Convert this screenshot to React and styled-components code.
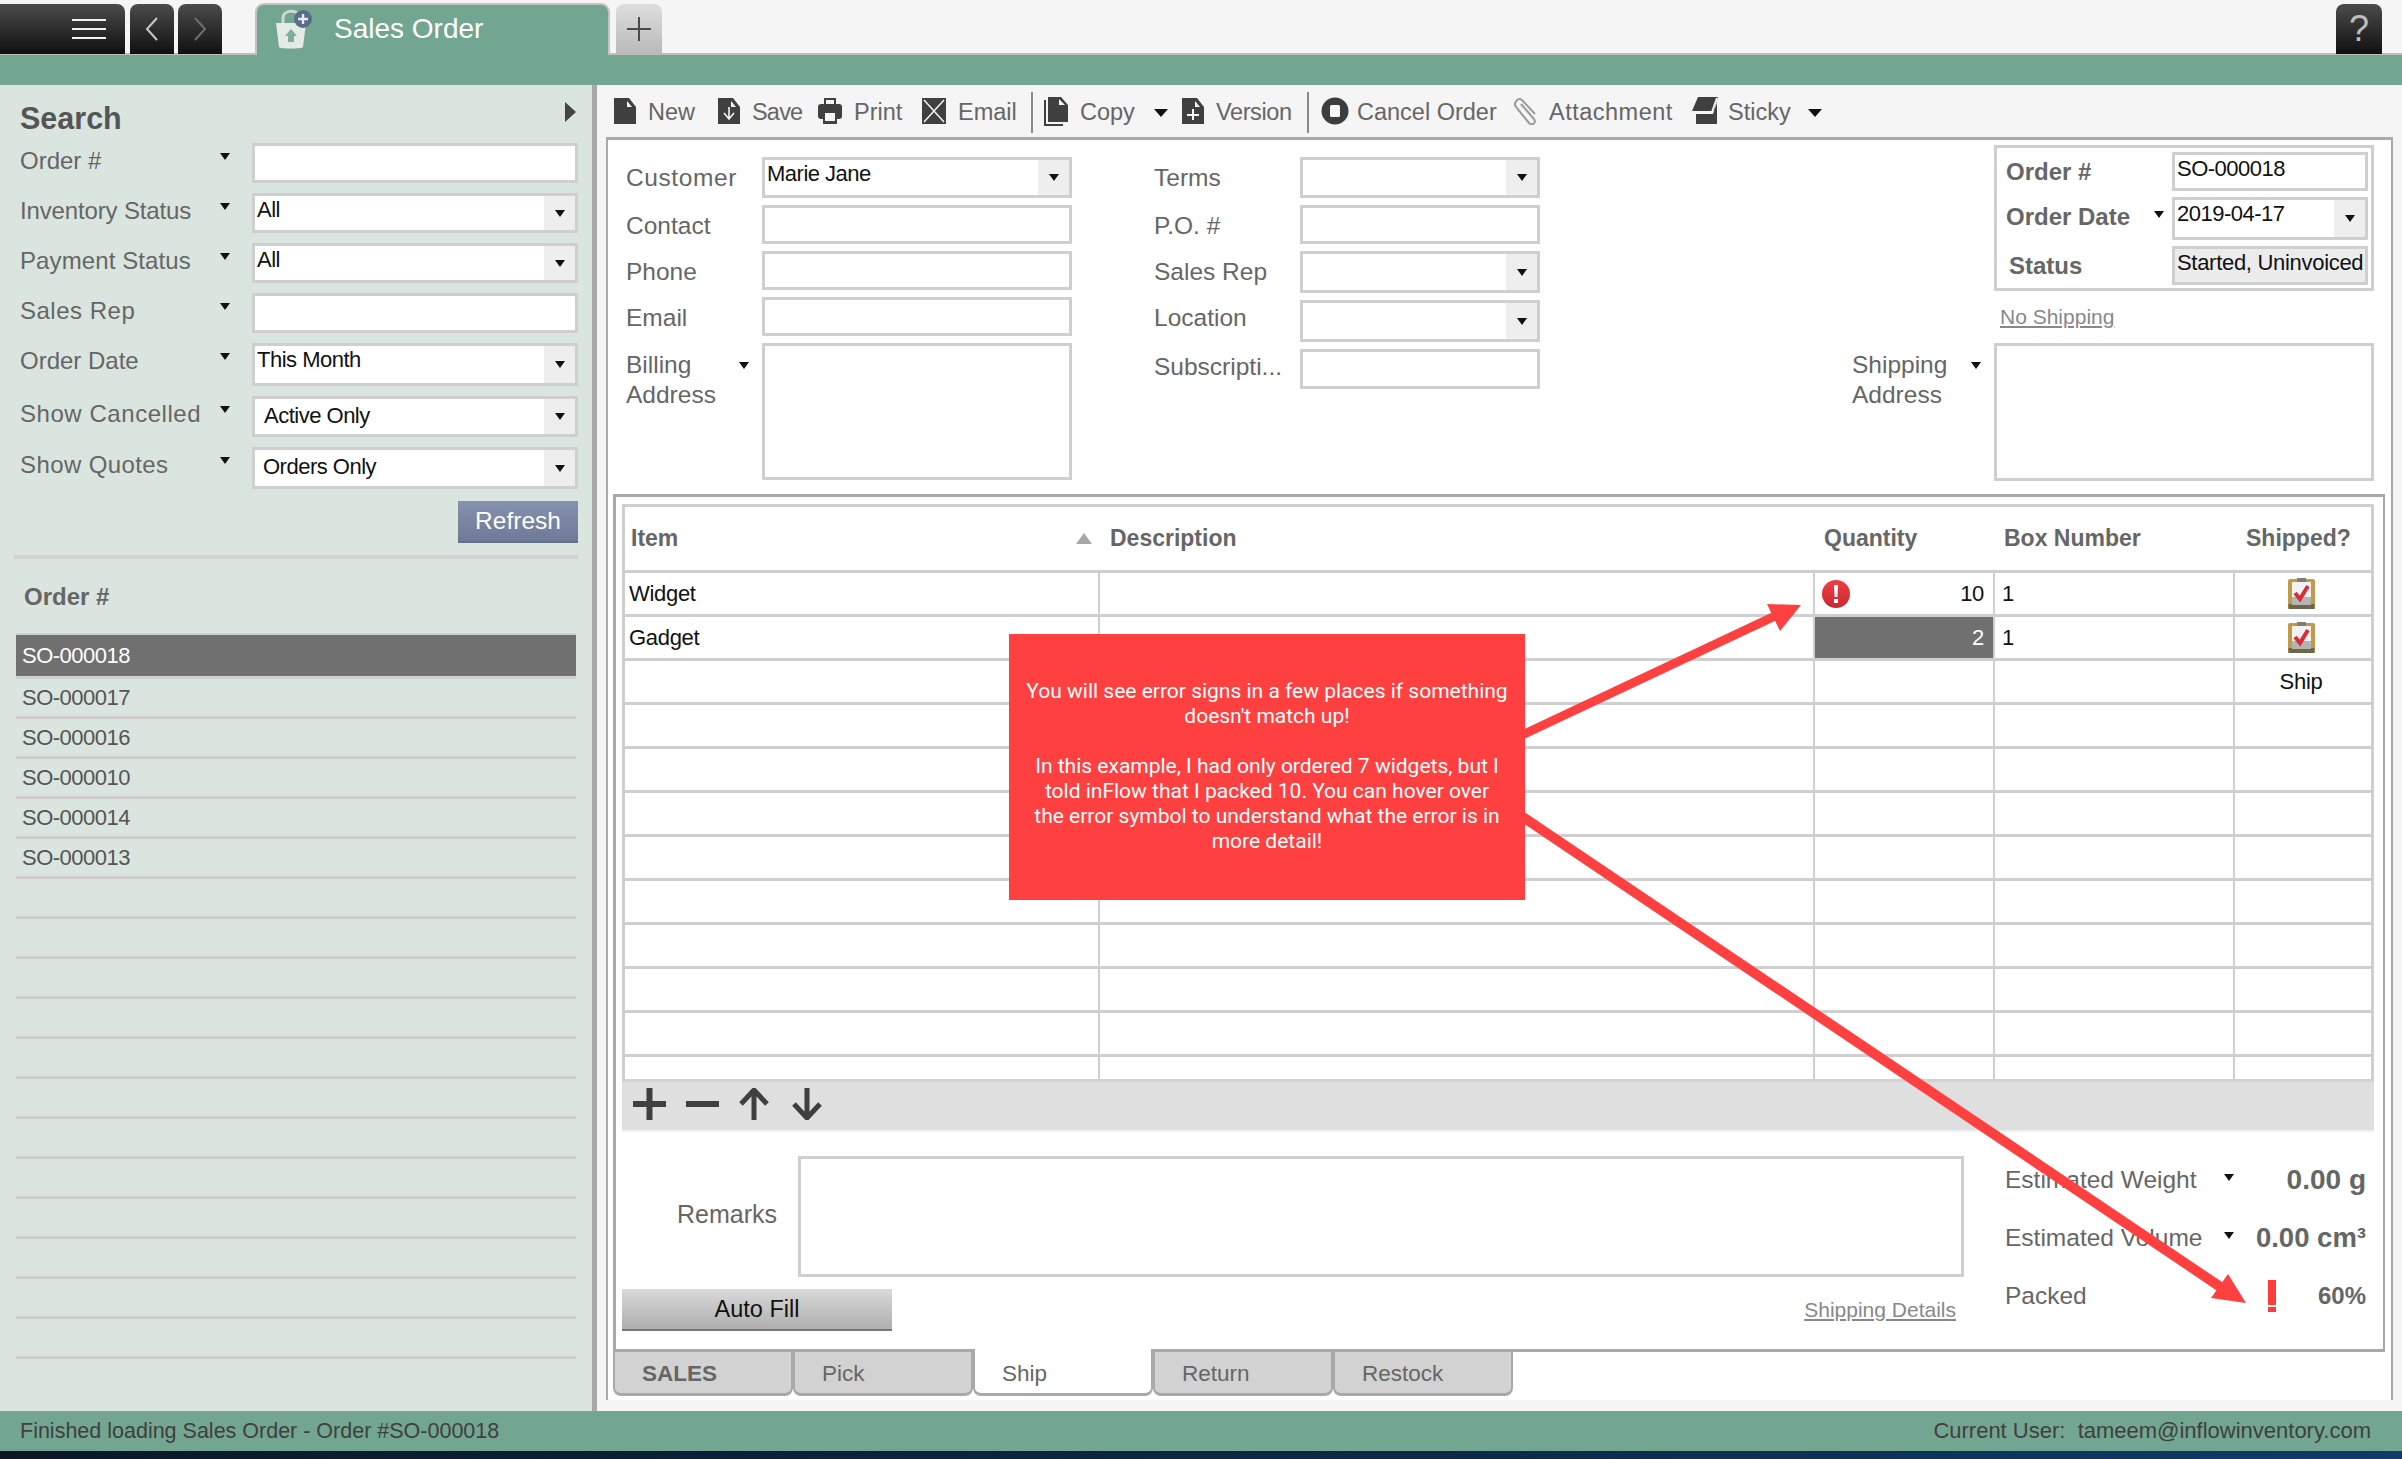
import React from "react";
import styled, { createGlobalStyle } from "styled-components";

const GlobalStyle = createGlobalStyle`
  html, body {
    margin: 0;
    padding: 0;
    width: 2402px;
    height: 1459px;
    overflow: hidden;
    background: #f5f5f5;
    font-family: "Liberation Sans", Arial, sans-serif;
  }
  #root {
    width: 2402px;
    height: 1459px;
  }
`;

const GREEN = "#73a690";
const LINE = "#cfcfcf";

const Page = styled.div`
  position: relative;
  display: flex;
  flex-direction: column;
  width: 2402px;
  height: 1459px;
  overflow: hidden;
`;

/* top bar */
const TopBar = styled.div`
  display: flex;
  align-items: flex-end;
  box-sizing: border-box;
  height: 55px;
  padding-top: 3px;
  background: #f5f5f5;
  border-bottom: 2px solid #bdbdbd;
`;

const BlackBtn = styled.div`
  display: flex;
  align-items: center;
  justify-content: ${(p) => p.$justify || "center"};
  box-sizing: border-box;
  width: ${(p) => p.$w}px;
  height: 50px;
  margin-left: ${(p) => p.$ml || 0}px;
  margin-right: ${(p) => p.$mr || 0}px;
  padding-right: ${(p) => p.$pr || 0}px;
  margin-bottom: -1px;
  border-radius: ${(p) => (p.$flat ? "0 8px 0 0" : "8px 8px 0 0")};
  background: linear-gradient(#4b4b4b, #101010);
  color: #bdbdbd;
  font-size: 36px;
  font-weight: 300;
`;

const OrderTab = styled.div`
  display: flex;
  align-items: center;
  box-sizing: border-box;
  width: 355px;
  height: 52px;
  margin: 0 0 -2px 33px;
  padding: 0 0 3px 17px;
  border: 2px solid #c4c4c4;
  border-bottom: none;
  border-radius: 9px 9px 0 0;
  background: ${GREEN};
  color: #fff;
  font-size: 28px;
`;

const TabTitle = styled.span`
  margin-left: 22px;
`;

const PlusTab = styled.div`
  display: flex;
  align-items: center;
  justify-content: center;
  box-sizing: border-box;
  width: 46px;
  height: 50px;
  margin-left: 6px;
  margin-bottom: -1px;
  border-radius: 8px 8px 0 0;
  background: linear-gradient(#dedede, #b9b9b9);
`;

const Spacer = styled.div`
  flex: 1;
`;

const GreenBand = styled.div`
  flex: none;
  height: 30px;
  background: ${GREEN};
`;

const Main = styled.div`
  display: flex;
  flex: none;
  height: 1326px;
`;

/* left side */
const Sidebar = styled.aside`
  box-sizing: border-box;
  flex: none;
  width: 597px;
  padding: 0 14px 0 20px;
  background: #dbe5df;
  border-right: 5px solid #a9a9a9;
`;

const SearchHead = styled.div`
  display: flex;
  justify-content: space-between;
  height: 58px;
  padding-right: 2px;
`;

const SearchTitle = styled.h2`
  margin: 15px 0 0;
  font-size: 30.5px;
  line-height: 36px;
  font-weight: 700;
  color: #555;
`;

const CollapseArrow = styled.div`
  width: 0;
  height: 0;
  margin-top: 17px;
  border-left: 11px solid #444;
  border-top: 10px solid transparent;
  border-bottom: 10px solid transparent;
`;

const SearchRows = styled.div`
  display: flex;
  flex-direction: column;
  gap: 10px;
`;

const SearchRow = styled.div`
  display: flex;
  height: ${(p) => p.$h}px;
`;

const SearchLabel = styled.div`
  display: flex;
  justify-content: space-between;
  box-sizing: border-box;
  width: 232px;
  padding-right: 22px;
  font-size: 24px;
  line-height: 36px;
  letter-spacing: ${(p) => p.$ls || 0}px;
  color: #666;
  white-space: nowrap;
`;

const Caret = styled.span`
  flex: none;
  width: 0;
  height: 0;
  margin-top: ${(p) => p.$mt || 0}px;
  border-left: ${(p) => p.$size || 5.5}px solid transparent;
  border-right: ${(p) => p.$size || 5.5}px solid transparent;
  border-top: ${(p) => (p.$size ? p.$size + 1 : 7)}px solid #111;
`;

const Box = styled.div`
  display: flex;
  box-sizing: border-box;
  flex: none;
  width: ${(p) => (p.$w ? p.$w + "px" : "auto")};
  height: ${(p) => (p.$h ? p.$h + "px" : "100%")};
  border: 3px solid ${LINE};
  background: ${(p) => p.$bg || "#fff"};
`;

const BoxText = styled.div`
  flex: 1;
  padding: ${(p) => p.$pt || 0}px 0 0 ${(p) => p.$pl || 2}px;
  font-size: 22px;
  line-height: 28px;
  letter-spacing: ${(p) => (p.$ls !== undefined ? p.$ls : -0.5)}px;
  color: #111;
  white-space: nowrap;
`;

const DropBtn = styled.div`
  display: flex;
  align-items: center;
  justify-content: center;
  flex: none;
  width: 31px;
  background: #eeeeee;
`;

const RefreshRow = styled.div`
  display: flex;
  justify-content: flex-end;
  margin-top: 12px;
`;

const RefreshBtn = styled.div`
  box-sizing: border-box;
  width: 120px;
  height: 42px;
  background: linear-gradient(#8591ad, #6f7a98);
  border-bottom: 2px solid #666f8a;
  color: #fff;
  font-size: 24.5px;
  line-height: 40px;
  text-align: center;
`;

const SideDivider = styled.div`
  height: 4px;
  margin: 12px 0 0 -6px;
  background: #d2d2d2;
`;

const ListTitle = styled.div`
  margin: 20px 0 0 4px;
  height: 54px;
  font-size: 24px;
  font-weight: 700;
  line-height: 36px;
  color: #666;
`;

const OrderList = styled.div`
  margin-left: -4px;
  width: 560px;
  border-top: 2px solid ${LINE};
`;

const OrderRow = styled.div`
  box-sizing: border-box;
  height: ${(p) => (p.$active ? 44 : 40)}px;
  padding-left: 6px;
  border-bottom: 3px solid ${LINE};
  background: ${(p) => (p.$active ? "linear-gradient(#707070 42px, #dbe5df 42px)" : "transparent")};
  color: ${(p) => (p.$active ? "#fff" : "#555")};
  font-size: 22px;
  letter-spacing: -0.5px;
  line-height: ${(p) => (p.$active ? 42 : 38)}px;
`;

/* right side */
const Content = styled.main`
  flex: 1;
  background: #f5f5f5;
`;

const Toolbar = styled.div`
  display: flex;
  align-items: center;
  box-sizing: border-box;
  height: 52px;
  padding: 3px 0 0 17px;
`;

const ToolBtn = styled.div`
  display: flex;
  align-items: center;
  gap: ${(p) => p.$gap || 12}px;
  flex: none;
  width: ${(p) => p.$w}px;
  font-size: 23.5px;
  letter-spacing: ${(p) => p.$ls || 0}px;
  color: #666;
  white-space: nowrap;

  svg {
    margin-top: -4px;
  }
`;

const ToolSep = styled.div`
  flex: none;
  width: 2px;
  height: 41px;
  margin: 0 ${(p) => p.$mr}px 0 0;
  background: #8a8a8a;
`;

const OuterPanel = styled.div`
  box-sizing: border-box;
  width: 1787px;
  height: 1263px;
  margin-left: 9px;
  background: #fff;
  border: 2px solid #a9a9a9;
  border-top-width: 3px;
  border-bottom: none;
`;

const FormTop = styled.div`
  display: flex;
  height: 354px;
`;

const FormCol = styled.div`
  display: flex;
  flex-direction: column;
  gap: 7px;
  flex: none;
  width: ${(p) => p.$w}px;
  margin-left: ${(p) => p.$ml}px;
  padding-top: 17px;
`;

const FormRow = styled.div`
  display: flex;
  height: ${(p) => p.$h}px;
`;

const FormLabel = styled.div`
  box-sizing: border-box;
  flex: none;
  width: ${(p) => p.$w}px;
  font-size: 24.5px;
  line-height: ${(p) => p.$lh || 42}px;
  letter-spacing: ${(p) => p.$ls || 0}px;
  color: #666;
  white-space: nowrap;
`;

const MultiLabel = styled.div`
  display: flex;
  justify-content: space-between;
  box-sizing: border-box;
  flex: none;
  width: ${(p) => p.$w}px;
  padding: 7px 13px 0 0;
  font-size: 24.5px;
  line-height: 30px;
  color: #666;
`;

const RightCol = styled.div`
  display: flex;
  flex-direction: column;
  align-items: flex-end;
  flex: none;
  width: 522px;
  margin-left: 312px;
  padding-top: 5px;
`;

const OrderBox = styled.div`
  display: flex;
  flex-direction: column;
  gap: 6px;
  box-sizing: border-box;
  width: 380px;
  height: 146px;
  padding: 4px 3px 0 9px;
  border: 3px solid ${LINE};
`;

const OrderBoxRow = styled.div`
  display: flex;
  height: ${(p) => p.$h}px;
`;

const OrderBoxLabel = styled.div`
  display: flex;
  justify-content: space-between;
  box-sizing: border-box;
  flex: none;
  width: 166px;
  padding: 0 8px 0 ${(p) => p.$pl || 0}px;
  font-size: 24px;
  font-weight: 700;
  line-height: 40px;
  color: #666;
  white-space: nowrap;
`;

const LinkText = styled.a`
  font-size: 21px;
  line-height: 26px;
  color: #888;
  text-decoration: underline;
`;

const NoShippingRow = styled.div`
  box-sizing: border-box;
  width: 380px;
  height: 52px;
  padding: 13px 0 0 6px;
`;

const InnerPanel = styled.div`
  box-sizing: border-box;
  width: 1772px;
  height: 858px;
  margin-left: 5px;
  padding: 7px 0 0 6px;
  border: 3px solid #a9a9a9;
  border-right-width: 2px;
`;

const Grid = styled.div`
  box-sizing: border-box;
  width: 1752px;
  height: 575px;
  overflow: hidden;
  border: 3px solid ${LINE};
  border-bottom: none;
`;

const GridRow = styled.div`
  display: grid;
  grid-template-columns: 475px 715px 180px 240px 1fr;
  box-sizing: border-box;
  height: ${(p) => p.$h || 44}px;
  border-bottom: 3px solid ${LINE};
`;

const HeadCell = styled.div`
  display: flex;
  align-items: center;
  justify-content: space-between;
  padding: 0 ${(p) => p.$pr || 0}px 0 ${(p) => p.$pl}px;
  font-size: 23px;
  font-weight: 700;
  color: #666;
`;

const SortArrow = styled.span`
  width: 0;
  height: 0;
  border-left: 8px solid transparent;
  border-right: 8px solid transparent;
  border-bottom: 11px solid #a8a8a8;
`;

const Cell = styled.div`
  display: flex;
  align-items: center;
  justify-content: ${(p) => p.$justify || "flex-start"};
  box-sizing: border-box;
  padding: 0 ${(p) => p.$pr || 0}px 0 ${(p) => p.$pl || 0}px;
  border-right: ${(p) => (p.$last ? "none" : `2px solid ${LINE}`)};
  background: ${(p) => (p.$active ? "#707070" : "transparent")};
  color: ${(p) => (p.$active ? "#fff" : "#111")};
  font-size: 22px;
  letter-spacing: -0.3px;
`;

const RowTools = styled.div`
  display: flex;
  align-items: center;
  box-sizing: border-box;
  width: 1752px;
  height: 53px;
  padding: 0 0 4px 11px;
  background: #dfdfdf;
  border-top: 3px solid #d2d2d2;
  border-bottom: 2px solid #eef2f6;
`;

const RowToolIcon = styled.svg`
  flex: none;
  margin-right: ${(p) => p.$mr || 0}px;
`;

const BottomArea = styled.div`
  display: flex;
`;

const BottomLeft = styled.div`
  flex: none;
  width: 1342px;
  padding-top: 24px;
`;

const RemarksRow = styled.div`
  display: flex;
  align-items: center;
  height: 121px;
`;

const RemarksLabel = styled.div`
  flex: none;
  box-sizing: border-box;
  width: 176px;
  padding: 0 21px 4px 0;
  text-align: right;
  font-size: 25px;
  color: #666;
`;

const BottomFooter = styled.div`
  display: flex;
  align-items: center;
  justify-content: space-between;
  margin-top: 12px;
  padding-right: 8px;
`;

const AutoFillBtn = styled.div`
  box-sizing: border-box;
  width: 270px;
  height: 42px;
  background: linear-gradient(#d9d9d9, #afafaf);
  border-bottom: 2px solid #777;
  color: #111;
  font-size: 23.5px;
  line-height: 41px;
  text-align: center;
`;

const Summary = styled.div`
  flex: none;
  width: 361px;
  margin-left: 41px;
  padding-top: 19px;
`;

const SummaryRow = styled.div`
  display: flex;
  align-items: center;
  height: 58px;
`;

const SummaryLabel = styled.div`
  flex: none;
  width: ${(p) => p.$w}px;
  font-size: 24.5px;
  color: #666;
  white-space: nowrap;
`;

const SummaryValue = styled.div`
  margin-left: auto;
  font-size: ${(p) => p.$fs || 27.5}px;
  font-weight: 700;
  color: #666;
  white-space: nowrap;
`;

const Tabs = styled.div`
  position: relative;
  display: flex;
  margin: -3px 0 0 5px;
`;

const SheetTab = styled.div`
  box-sizing: border-box;
  width: 180px;
  height: 47px;
  padding-left: 27px;
  border: 2px solid #a9a9a9;
  border-top-width: ${(p) => (p.$active ? 0 : 3)}px;
  border-bottom-width: 3px;
  border-radius: 0 0 8px 8px;
  background: ${(p) => (p.$active ? "#fff" : "#d2d2d2")};
  font-size: 22.5px;
  font-weight: ${(p) => (p.$bold ? 700 : 400)};
  line-height: ${(p) => (p.$active ? 50 : 44)}px;
  color: #666;
`;

const StatusBar = styled.footer`
  display: flex;
  align-items: center;
  justify-content: space-between;
  flex: none;
  height: 40px;
  padding: 0 31px 0 20px;
  background: ${GREEN};
  font-size: 22px;
  color: #3f3f3f;
`;

const StatusLeft = styled.span`
  font-size: 21.5px;
`;

const DesktopStrip = styled.div`
  flex: none;
  height: 8px;
  background: linear-gradient(90deg, #0a1826, #0c2a48 60%, #0f3c68);
`;

/* annotation on top of the app */
const Callout = styled.div`
  position: absolute;
  left: 1009px;
  top: 634px;
  display: flex;
  align-items: center;
  justify-content: center;
  box-sizing: border-box;
  width: 516px;
  height: 266px;
  padding-bottom: 2px;
  background: #ff4040;
  color: #fff;
  font-family: Roboto, "Liberation Sans", sans-serif;
  font-size: 21px;
  line-height: 25px;
  text-align: center;
  white-space: nowrap;
`;

const ArrowLayer = styled.svg`
  position: absolute;
  left: 0;
  top: 0;
  pointer-events: none;
`;

/* drawings */
const DARK = "#404040";

const DocPath = "M0 0h15l7 9v17H0z";

const NewIcon = () => (
  <svg width="22" height="26" viewBox="0 0 22 26">
    <path d={DocPath} fill={DARK} />
    <path d="M13 3l5 6h-5z" fill="#f5f5f5" />
  </svg>
);

const SaveIcon = () => (
  <svg width="22" height="26" viewBox="0 0 22 26">
    <path d={DocPath} fill={DARK} />
    <path d="M13 3l5 6h-5z" fill="#f5f5f5" />
    <path d="M11 9v11M6 15l5 6 5-6" fill="none" stroke="#f5f5f5" strokeWidth="1.6" />
  </svg>
);

const PrintIcon = () => (
  <svg width="24" height="26" viewBox="0 0 24 26">
    <path d="M6 0h12v7H6z" fill={DARK} />
    <path d="M8 2h8v5H8z" fill="#f5f5f5" />
    <rect x="0" y="6" width="24" height="15" rx="3" fill={DARK} />
    <path d="M5 15h14v11H5z" fill={DARK} />
    <path d="M7 15h10v8H7z" fill="#f5f5f5" />
  </svg>
);

const EmailIcon = () => (
  <svg width="24" height="26" viewBox="0 0 24 26">
    <rect width="24" height="26" fill={DARK} />
    <path d="M2 2l20 22M22 2L2 24" stroke="#f5f5f5" strokeWidth="1.5" />
  </svg>
);

const CopyIcon = () => (
  <svg width="25" height="30" viewBox="0 0 25 30">
    <path d="M4 1h13l7 8v17H4z" fill={DARK} />
    <path d="M15 3l6 6h-6z" fill="#f5f5f5" />
    <path d="M1 4v25h18" fill="none" stroke={DARK} strokeWidth="2" />
  </svg>
);

const VersionIcon = () => (
  <svg width="22" height="26" viewBox="0 0 22 26">
    <path d={DocPath} fill={DARK} />
    <path d="M13 3l5 6h-5z" fill="#f5f5f5" />
    <path d="M11 11v11M5 17h12" stroke="#f5f5f5" strokeWidth="2" />
  </svg>
);

const CancelIcon = () => (
  <svg width="28" height="28" viewBox="0 0 28 28">
    <circle cx="14" cy="14" r="13.5" fill="#3d3d3d" />
    <rect x="9" y="8" width="10" height="12" rx="1.5" fill="#f5f5f5" />
  </svg>
);

const ClipIcon = () => (
  <svg width="27" height="28" viewBox="0 0 27 28">
    <path
      d="M8 7l13 15c3 4-2 7-5 4L3 10C0 6 5 0 9 3l13 14"
      transform="translate(1 0)"
      fill="none"
      stroke="#9a9a9a"
      strokeWidth="2"
    />
  </svg>
);

const StickyIcon = () => (
  <svg width="26" height="27" viewBox="0 0 26 27">
    <path d="M6 0h20l-4 14H0z" fill={DARK} />
    <path d="M0 15h20L25 1" fill="none" stroke="#f5f5f5" strokeWidth="2" />
    <path d="M4 17h17l4-11v21H4z" fill={DARK} />
  </svg>
);

const MenuIcon = () => (
  <svg width="34" height="20" viewBox="0 0 34 20">
    <path d="M0 1h34M0 10h34M0 19h34" stroke="#f2f2f2" strokeWidth="2" />
  </svg>
);

const Chevron = ({ dir, color }) => (
  <svg width="14" height="24" viewBox="0 0 14 24">
    <path
      d={dir === "left" ? "M12 1L2 12l10 11" : "M2 1l10 11L2 23"}
      fill="none"
      stroke={color}
      strokeWidth="2"
    />
  </svg>
);

const BagIcon = () => (
  <svg width="38" height="40" viewBox="0 0 38 40">
    <path d="M9 15V9c0-9 17-9 17 0" fill="none" stroke="#cfd8d4" strokeWidth="3" />
    <path d="M2 14h30l-3 24c-1 2-23 2-24 0z" fill="#e4ebe7" />
    <path d="M17 20l6 7h-3v6h-6v-6h-3z" fill="#7fae9a" />
    <circle cx="29" cy="10" r="9" fill="#5d6b8a" />
    <path d="M29 5v10M24 10h10" stroke="#e8ecf2" strokeWidth="2.4" />
  </svg>
);

const PlusThin = () => (
  <svg width="24" height="24" viewBox="0 0 24 24">
    <path d="M12 0v24M0 12h24" stroke="#4a4a4a" strokeWidth="2" />
  </svg>
);

const RowPlus = () => (
  <RowToolIcon $mr={20} width="33" height="32" viewBox="0 0 33 32">
    <path d="M16.5 0v32M0 16h33" stroke="#3f3f3f" strokeWidth="6" />
  </RowToolIcon>
);

const RowMinus = () => (
  <RowToolIcon $mr={20} width="33" height="32" viewBox="0 0 33 32">
    <path d="M0 16h33" stroke="#3f3f3f" strokeWidth="6" />
  </RowToolIcon>
);

const RowUp = () => (
  <RowToolIcon $mr={23} width="30" height="32" viewBox="0 0 30 32">
    <path d="M15 32V3M2 16L15 2l13 14" fill="none" stroke="#3f3f3f" strokeWidth="5" />
  </RowToolIcon>
);

const RowDown = () => (
  <RowToolIcon width="30" height="32" viewBox="0 0 30 32">
    <path d="M15 0v29M2 16l13 14 13-14" fill="none" stroke="#3f3f3f" strokeWidth="5" />
  </RowToolIcon>
);

const ErrorIcon = () => (
  <svg width="28" height="28" viewBox="0 0 28 28">
    <defs>
      <linearGradient id="errFill" x1="0" y1="0" x2="0" y2="1">
        <stop offset="0" stopColor="#ee3d44" />
        <stop offset="1" stopColor="#c92a30" />
      </linearGradient>
    </defs>
    <circle cx="14" cy="14" r="14" fill="url(#errFill)" />
    <path d="M12 5h4l-.6 12h-2.8z" fill="#fff" />
    <rect x="12" y="19" width="4" height="4" fill="#fff" />
  </svg>
);

const ShippedIcon = () => (
  <svg width="27" height="31" viewBox="0 0 27 31">
    <rect x="0" y="1" width="27" height="30" rx="2" fill="#c39a48" />
    <rect x="0.5" y="26" width="26" height="5" fill="#6f6547" />
    <rect x="4" y="4" width="19" height="23" fill="#f2f2f0" />
    <rect x="4" y="19" width="19" height="8" fill="#b4b4b4" />
    <rect x="9" y="0" width="9" height="4" fill="#7d7d7d" />
    <path d="M7 15l5 6 8-13" fill="none" stroke="#d5303a" strokeWidth="4" />
  </svg>
);

const PackedMark = () => (
  <svg width="8" height="32" viewBox="0 0 8 32">
    <path d="M0 0h8v25H0zM0 27h8v5H0z" fill="#ff3b3b" />
  </svg>
);

const SEARCH_ROWS = [
  { label: "Order #", h: 40 },
  { label: "Inventory Status", h: 40, value: "All", drop: true, ls: -0.15 },
  { label: "Payment Status", h: 40, value: "All", drop: true, ls: 0.1 },
  { label: "Sales Rep", h: 40, ls: 0.5 },
  { label: "Order Date", h: 43, value: "This Month", drop: true },
  { label: "Show Cancelled", h: 41, value: "Active Only", drop: true, pl: 9, pt: 3, ls: 0.55 },
  { label: "Show Quotes", h: 42, value: "Orders Only", drop: true, pl: 8, pt: 3, ls: 0.4 },
];

const ORDERS = ["SO-000018", "SO-000017", "SO-000016", "SO-000010", "SO-000014", "SO-000013"];

const LINES = [
  { id: "new", w: 104, Icon: NewIcon, label: "New" },
  { id: "save", w: 100, Icon: SaveIcon, label: "Save", ls: -0.8 },
  { id: "print", w: 104, Icon: PrintIcon, label: "Print" },
  { id: "email", w: 109, Icon: EmailIcon, label: "Email" },
];

const Rows = [
  { item: "Widget", qty: "10", box: "1", error: true, shipped: true },
  { item: "Gadget", qty: "2", box: "1", active: true, shipped: true },
  { ship: true },
  {}, {}, {}, {}, {}, {}, {}, {}, {}, {},
];

export default function App() {
  return (
    <Page>
      <GlobalStyle />

      <TopBar>
        <BlackBtn $w={125} $flat $justify="flex-end" $pr={19}>
          <MenuIcon />
        </BlackBtn>
        <BlackBtn $w={44} $ml={5}>
          <Chevron dir="left" color="#c8c8c8" />
        </BlackBtn>
        <BlackBtn $w={44} $ml={4}>
          <Chevron dir="right" color="#6f6f6f" />
        </BlackBtn>
        <OrderTab>
          <BagIcon />
          <TabTitle>Sales Order</TabTitle>
        </OrderTab>
        <PlusTab>
          <PlusThin />
        </PlusTab>
        <Spacer />
        <BlackBtn $w={46} $mr={20}>
          ?
        </BlackBtn>
      </TopBar>
      <GreenBand />

      <Main>
        <Sidebar>
          <SearchHead>
            <SearchTitle>Search</SearchTitle>
            <CollapseArrow />
          </SearchHead>
          <SearchRows>
            {SEARCH_ROWS.map((row) => (
              <SearchRow key={row.label} $h={row.h}>
                <SearchLabel $ls={row.ls}>
                  {row.label}
                  <Caret $mt={10} />
                </SearchLabel>
                <Box $w={326}>
                  <BoxText $pl={row.pl} $pt={row.pt}>
                    {row.value}
                  </BoxText>
                  {row.drop && (
                    <DropBtn>
                      <Caret />
                    </DropBtn>
                  )}
                </Box>
              </SearchRow>
            ))}
          </SearchRows>
          <RefreshRow>
            <RefreshBtn>Refresh</RefreshBtn>
          </RefreshRow>
          <SideDivider />
          <ListTitle>Order #</ListTitle>
          <OrderList>
            {ORDERS.map((o, i) => (
              <OrderRow key={o} $active={i === 0}>
                {o}
              </OrderRow>
            ))}
            {Array.from({ length: 12 }).map((_, i) => (
              <OrderRow key={i} />
            ))}
          </OrderList>
        </Sidebar>

        <Content>
          <Toolbar>
            {LINES.map(({ id, w, Icon, label, ls }) => (
              <ToolBtn key={id} $w={w} $ls={ls}>
                <Icon />
                {label}
              </ToolBtn>
            ))}
            <ToolSep $mr={11} />
            <ToolBtn $w={110} $gap={11}>
              <CopyIcon />
              Copy
            </ToolBtn>
            <ToolBtn $w={28}>
              <Caret $size={7} />
            </ToolBtn>
            <ToolBtn $w={125} $ls={-0.4}>
              <VersionIcon />
              Version
            </ToolBtn>
            <ToolSep $mr={12} />
            <ToolBtn $w={191} $gap={8}>
              <CancelIcon />
              Cancel Order
            </ToolBtn>
            <ToolBtn $w={180} $gap={10} $ls={0.5}>
              <ClipIcon />
              Attachment
            </ToolBtn>
            <ToolBtn $w={116} $gap={10}>
              <StickyIcon />
              Sticky
            </ToolBtn>
            <ToolBtn $w={20}>
              <Caret $size={7} />
            </ToolBtn>
          </Toolbar>

          <OuterPanel>
            <FormTop>
              <FormCol $w={446} $ml={18}>
                <FormRow $h={41}>
                  <FormLabel $w={136} $ls={0.6}>
                    Customer
                  </FormLabel>
                  <Box $w={310}>
                    <BoxText>Marie Jane</BoxText>
                    <DropBtn>
                      <Caret />
                    </DropBtn>
                  </Box>
                </FormRow>
                {["Contact", "Phone", "Email"].map((l) => (
                  <FormRow key={l} $h={39}>
                    <FormLabel $w={136}>{l}</FormLabel>
                    <Box $w={310} />
                  </FormRow>
                ))}
                <FormRow $h={137}>
                  <MultiLabel $w={136}>
                    <span>
                      Billing
                      <br />
                      Address
                    </span>
                    <Caret $mt={12} />
                  </MultiLabel>
                  <Box $w={310} />
                </FormRow>
              </FormCol>

              <FormCol $w={386} $ml={82}>
                <FormRow $h={41}>
                  <FormLabel $w={146}>Terms</FormLabel>
                  <Box $w={240}>
                    <BoxText />
                    <DropBtn>
                      <Caret />
                    </DropBtn>
                  </Box>
                </FormRow>
                <FormRow $h={39}>
                  <FormLabel $w={146}>P.O. #</FormLabel>
                  <Box $w={240} />
                </FormRow>
                <FormRow $h={42}>
                  <FormLabel $w={146}>Sales Rep</FormLabel>
                  <Box $w={240}>
                    <BoxText />
                    <DropBtn>
                      <Caret />
                    </DropBtn>
                  </Box>
                </FormRow>
                <FormRow $h={42}>
                  <FormLabel $w={146} $lh={36}>
                    Location
                  </FormLabel>
                  <Box $w={240}>
                    <BoxText />
                    <DropBtn>
                      <Caret />
                    </DropBtn>
                  </Box>
                </FormRow>
                <FormRow $h={40}>
                  <FormLabel $w={146} $lh={36}>
                    Subscripti...
                  </FormLabel>
                  <Box $w={240} />
                </FormRow>
              </FormCol>

              <RightCol>
                <OrderBox>
                  <OrderBoxRow $h={39}>
                    <OrderBoxLabel>Order #</OrderBoxLabel>
                    <Box $w={196}>
                      <BoxText>SO-000018</BoxText>
                    </Box>
                  </OrderBoxRow>
                  <OrderBoxRow $h={43}>
                    <OrderBoxLabel>
                      Order Date
                      <Caret $mt={14} />
                    </OrderBoxLabel>
                    <Box $w={196}>
                      <BoxText>2019-04-17</BoxText>
                      <DropBtn>
                        <Caret />
                      </DropBtn>
                    </Box>
                  </OrderBoxRow>
                  <OrderBoxRow $h={39}>
                    <OrderBoxLabel $pl={3}>Status</OrderBoxLabel>
                    <Box $w={196} $bg="#ececec">
                      <BoxText $ls={-0.3}>Started, Uninvoiced</BoxText>
                    </Box>
                  </OrderBoxRow>
                </OrderBox>
                <NoShippingRow>
                  <LinkText>No Shipping</LinkText>
                </NoShippingRow>
                <FormRow $h={138}>
                  <MultiLabel $w={142}>
                    <span>
                      Shipping
                      <br />
                      Address
                    </span>
                    <Caret $mt={12} />
                  </MultiLabel>
                  <Box $w={380} />
                </FormRow>
              </RightCol>
            </FormTop>

            <InnerPanel>
              <Grid>
                <GridRow $h={66}>
                  <HeadCell $pl={6} $pr={8}>
                    Item
                    <SortArrow />
                  </HeadCell>
                  <HeadCell $pl={10}>Description</HeadCell>
                  <HeadCell $pl={9}>Quantity</HeadCell>
                  <HeadCell $pl={9}>Box Number</HeadCell>
                  <HeadCell $pl={11}>Shipped?</HeadCell>
                </GridRow>
                {Rows.map((r, i) => (
                  <GridRow key={i}>
                    <Cell $pl={4}>{r.item}</Cell>
                    <Cell />
                    <Cell
                      $active={r.active}
                      $justify={r.error ? "space-between" : "flex-end"}
                      $pl={7}
                      $pr={9}
                    >
                      {r.error && <ErrorIcon />}
                      {r.qty}
                    </Cell>
                    <Cell $pl={7}>{r.box}</Cell>
                    <Cell $last $justify="center" $pr={4}>
                      {r.shipped && <ShippedIcon />}
                      {r.ship && "Ship"}
                    </Cell>
                  </GridRow>
                ))}
              </Grid>
              <RowTools>
                <RowPlus />
                <RowMinus />
                <RowUp />
                <RowDown />
              </RowTools>
              <BottomArea>
                <BottomLeft>
                  <RemarksRow>
                    <RemarksLabel>Remarks</RemarksLabel>
                    <Box $w={1166} />
                  </RemarksRow>
                  <BottomFooter>
                    <AutoFillBtn>Auto Fill</AutoFillBtn>
                    <LinkText>Shipping Details</LinkText>
                  </BottomFooter>
                </BottomLeft>
                <Summary>
                  <SummaryRow>
                    <SummaryLabel $w={219}>Estimated Weight</SummaryLabel>
                    <Caret $mt={-6} />
                    <SummaryValue $fs={28}>0.00 g</SummaryValue>
                  </SummaryRow>
                  <SummaryRow>
                    <SummaryLabel $w={219}>Estimated Volume</SummaryLabel>
                    <Caret $mt={-6} />
                    <SummaryValue>0.00 cm³</SummaryValue>
                  </SummaryRow>
                  <SummaryRow>
                    <SummaryLabel $w={263}>Packed</SummaryLabel>
                    <PackedMark />
                    <SummaryValue $fs={24}>60%</SummaryValue>
                  </SummaryRow>
                </Summary>
              </BottomArea>
            </InnerPanel>

            <Tabs>
              <SheetTab $bold>SALES</SheetTab>
              <SheetTab>Pick</SheetTab>
              <SheetTab $active>Ship</SheetTab>
              <SheetTab>Return</SheetTab>
              <SheetTab>Restock</SheetTab>
            </Tabs>
          </OuterPanel>
        </Content>
      </Main>

      <StatusBar>
        <StatusLeft>Finished loading Sales Order - Order #SO-000018</StatusLeft>
        <span>Current User:&nbsp; tameem@inflowinventory.com</span>
      </StatusBar>
      <DesktopStrip />

      <Callout>
        <div>
          You will see error signs in a few places if something
          <br />
          doesn't match up!
          <br />
          <br />
          In this example, I had only ordered 7 widgets, but I
          <br />
          told inFlow that I packed 10. You can hover over
          <br />
          the error symbol to understand what the error is in
          <br />
          more detail!
        </div>
      </Callout>
      <ArrowLayer width="2402" height="1459" viewBox="0 0 2402 1459">
        <path d="M1520 736L1775 616" stroke="#ff4040" strokeWidth="9" fill="none" />
        <path d="M1801 605L1767 604L1780 631z" fill="#ff4040" />
        <path d="M1520 815L2222 1288" stroke="#ff4040" strokeWidth="10" fill="none" />
        <path d="M2246 1303L2228 1274L2211 1298z" fill="#ff4040" />
      </ArrowLayer>
    </Page>
  );
}
